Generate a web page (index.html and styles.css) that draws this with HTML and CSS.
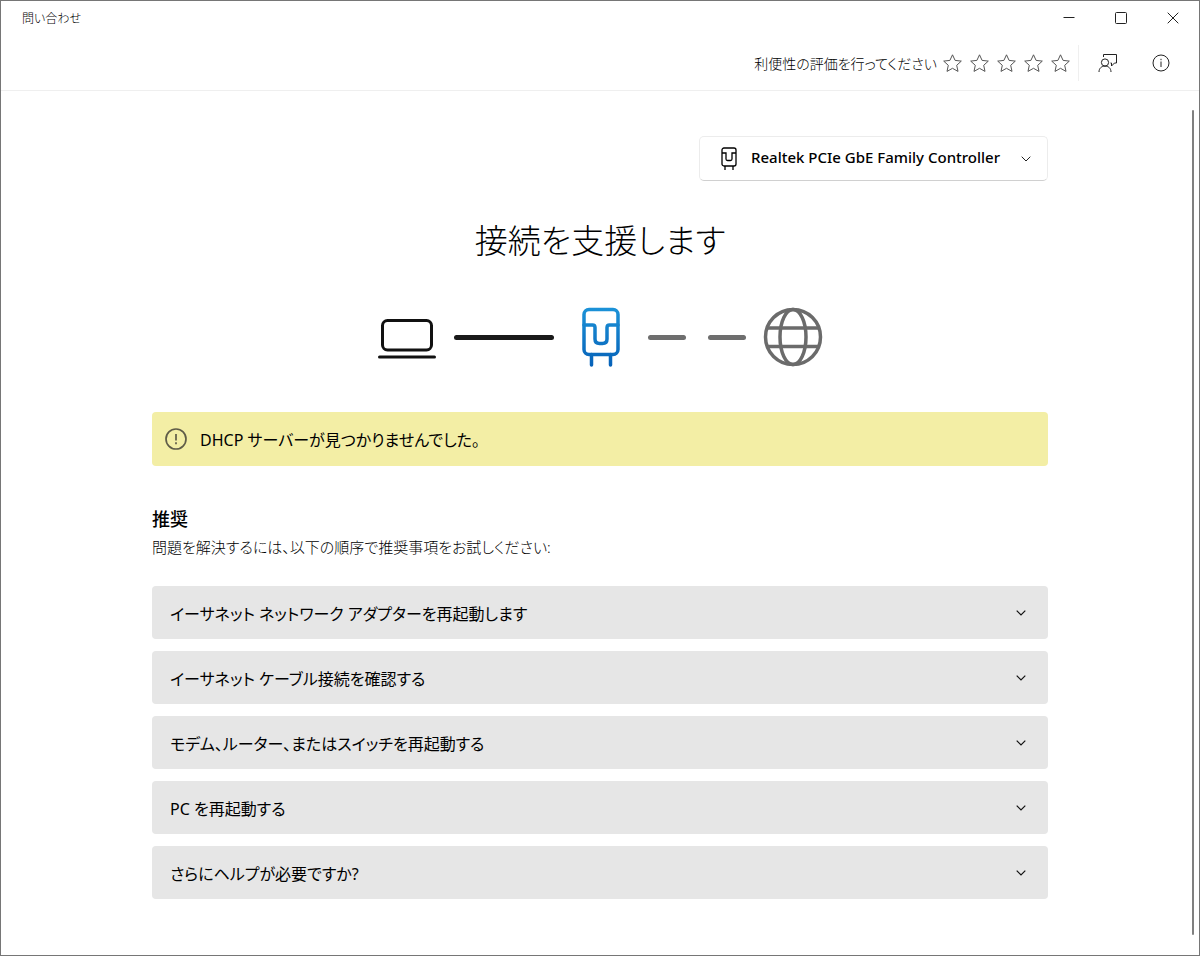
FILE: index.html
```html
<!DOCTYPE html>
<html lang="ja">
<head>
  <meta charset="UTF-8">
  <meta name="viewport" content="width=device-width, initial-scale=1.0">
  <title>問い合わせ</title>
  <link rel="stylesheet" href="styles.css">
</head>
<body>
  <div class="window">
    <header class="titlebar">
      <span class="app-name">問い合わせ</span>
      <div class="window-buttons">
        <button type="button" aria-label="最小化">
          <svg width="12" height="12" viewBox="0 0 12 12"><path d="M0.5 5.5h11"/></svg>
        </button>
        <button type="button" aria-label="最大化">
          <svg width="12" height="12" viewBox="0 0 12 12"><rect x="0.5" y="0.5" width="11" height="11" rx="1"/></svg>
        </button>
        <button type="button" aria-label="閉じる">
          <svg width="12" height="12" viewBox="0 0 12 12"><path d="M0.7 0.7l10.6 10.6M11.3 0.7L0.7 11.3"/></svg>
        </button>
      </div>
    </header>

    <!-- star outline shared by the rating buttons, chevron by the lists -->
    <svg class="symbols" width="0" height="0">
      <symbol id="star" viewBox="0 0 19 18">
        <path d="M9.5 0.800l2.600 5.600 6.200.7-4.600 4.200 1.300 6.100-5.500-3.100-5.500 3.100 1.300-6.100L0.700 7.100l6.200-.7z"/>
      </symbol>
      <symbol id="chevron" viewBox="0 0 10 6">
        <path d="M0.7 0.7L5 5l4.3-4.3"/>
      </symbol>
    </svg>

    <div class="toolbar">
      <span class="rating-text">利便性の評価を行ってください</span>
      <div class="rating">
        <button type="button" aria-label="星 1"><svg width="19" height="18"><use href="#star"/></svg></button>
        <button type="button" aria-label="星 2"><svg width="19" height="18"><use href="#star"/></svg></button>
        <button type="button" aria-label="星 3"><svg width="19" height="18"><use href="#star"/></svg></button>
        <button type="button" aria-label="星 4"><svg width="19" height="18"><use href="#star"/></svg></button>
        <button type="button" aria-label="星 5"><svg width="19" height="18"><use href="#star"/></svg></button>
      </div>
      <div class="tools">
        <button type="button" aria-label="フィードバック">
          <svg width="20" height="20" viewBox="0 0 20 20">
            <path d="M5.5 4V1.500h13v8.500h-2l-3 3v-3h-1"/>
            <circle cx="7" cy="9.500" r="3.600"/>
            <path d="M1 19c0-3.700 2.500-5.900 6-5.900s6 2.200 6 5.900"/>
          </svg>
        </button>
        <button type="button" aria-label="情報">
          <svg width="18" height="18" viewBox="0 0 18 18">
            <circle cx="9" cy="9" r="8"/>
            <path d="M9 7.500v5.500M9 4.800v1.400"/>
          </svg>
        </button>
      </div>
    </div>

    <main class="page">
      <div class="content">
        <div class="adapter">
          <svg class="adapter-icon" width="16" height="24" viewBox="0 0 16 24">
            <rect x="1" y="1" width="14" height="18" rx="2"/>
            <path d="M1 6h4v6q0 1.500 1.500 1.500h3q1.500 0 1.500-1.500V6h4M4 19v4M12 19v4"/>
          </svg>
          <select aria-label="ネットワーク アダプター">
            <option>Realtek PCIe GbE Family Controller</option>
          </select>
          <svg class="chevron" width="10" height="6"><use href="#chevron"/></svg>
        </div>

        <h1>接続を支援します</h1>

        <div class="diagram">
          <svg class="laptop" width="58" height="60" viewBox="0 0 58 60">
            <rect x="4.500" y="13.500" width="49" height="29.500" rx="5"/>
            <path d="M1.500 50h55"/>
          </svg>
          <span class="link link-ok"></span>
          <svg class="plug" width="38" height="60" viewBox="0 0 38 60">
            <defs>
              <linearGradient id="blue" gradientUnits="userSpaceOnUse" x1="0" y1="0" x2="0" y2="60">
                <stop offset="0" stop-color="#1c93d8"/>
                <stop offset="1" stop-color="#0661b8"/>
              </linearGradient>
            </defs>
            <rect x="2" y="2.500" width="34" height="45" rx="5"/>
            <path d="M2 18h8.500q2.500 0 2.500 2.500v11.500q0 4.500 4.500 4.500h3q4.500 0 4.500-4.500V20.500q0-2.500 2.500-2.500h8.500M9.500 47.500v10.500M28.500 47.500v10.500"/>
          </svg>
          <span class="link link-down"></span>
          <span class="link link-down"></span>
          <svg class="globe" width="60" height="60" viewBox="0 0 60 60">
            <circle cx="30" cy="30" r="27.500"/>
            <ellipse cx="30" cy="30" rx="13" ry="27.500"/>
            <path d="M4.500 21h51M4.500 39.500h51"/>
          </svg>
        </div>

        <div class="alert">
          <svg width="22" height="22" viewBox="0 0 22 22">
            <circle cx="11" cy="11" r="10"/>
            <path d="M11 6v6.500M11 14.300v2"/>
          </svg>
          <span>DHCP サーバーが見つかりませんでした。</span>
        </div>

        <h2>推奨</h2>
        <p class="hint">問題を解決するには、以下の順序で推奨事項をお試しください:</p>

        <div class="steps">
          <button type="button" class="step">イーサネット ネットワーク アダプターを再起動します<svg class="chevron" width="10" height="6"><use href="#chevron"/></svg></button>
          <button type="button" class="step">イーサネット ケーブル接続を確認する<svg class="chevron" width="10" height="6"><use href="#chevron"/></svg></button>
          <button type="button" class="step">モデム、ルーター、またはスイッチを再起動する<svg class="chevron" width="10" height="6"><use href="#chevron"/></svg></button>
          <button type="button" class="step">PC を再起動する<svg class="chevron" width="10" height="6"><use href="#chevron"/></svg></button>
          <button type="button" class="step">さらにヘルプが必要ですか?<svg class="chevron" width="10" height="6"><use href="#chevron"/></svg></button>
        </div>
      </div>
      <div class="scrollbar"></div>
    </main>
  </div>
</body>
</html>
```

FILE: styles.css
```css
* {
  margin: 0;
  padding: 0;
  box-sizing: border-box;
}

body {
  font-family: "Noto Sans", "Noto Sans CJK JP", sans-serif;
  font-feature-settings: "palt";
  color: #000;
  background-color: #fff;
}

button,
select {
  font: inherit;
  font-feature-settings: inherit;
  color: inherit;
  background: none;
  border: none;
  cursor: pointer;
}

svg {
  display: block;
  flex: none;
  fill: none;
  stroke: #222;
  stroke-width: 1;
}

.symbols {
  position: absolute;
}

.window {
  display: flex;
  flex-direction: column;
  min-height: 100vh;
  border: 1px solid #767676;
}

.titlebar {
  display: flex;
  align-items: center;
  justify-content: space-between;
  height: 34px;
  padding-left: 21px;
}

.app-name {
  font-size: 12px;
  font-weight: 300;
}

.window-buttons {
  display: flex;
}

.window-buttons button {
  display: flex;
  align-items: center;
  justify-content: center;
  width: 52px;
  height: 34px;
}

.toolbar {
  display: flex;
  align-items: center;
  justify-content: flex-end;
  height: 56px;
  border-bottom: 1px solid #efefef;
}

.rating-text {
  font-size: 14px;
  font-weight: 300;
}

.rating {
  display: flex;
  gap: 8px;
  padding: 0 8px 0 6px;
}

.rating svg {
  stroke: #555;
}

.tools {
  display: flex;
  height: 36px;
  padding: 0 12px 0 2px;
  border-left: 1px solid #efefef;
}

.tools button {
  display: flex;
  align-items: center;
  justify-content: center;
  width: 53px;
}

.page {
  position: relative;
  flex: 1;
  padding: 45px 40px 56px;
}

.content {
  display: flex;
  flex-direction: column;
  max-width: 896px;
  margin: 0 auto;
}

.adapter {
  display: flex;
  align-items: center;
  align-self: flex-end;
  height: 45px;
  padding: 0 16px 0 21px;
  border: 1px solid #ececec;
  border-bottom-color: #d0d0d0;
  border-radius: 5px;
}

.adapter-icon {
  margin-right: 14px;
  stroke: #000;
  stroke-width: 1.3;
}

.adapter select {
  appearance: none;
  margin-right: 20px;
  padding-bottom: 4px;
  font-size: 15px;
  font-weight: 500;
}

h1 {
  margin-top: 34px;
  font-size: 33px;
  font-weight: 300;
  line-height: 52px;
  text-align: center;
}

.diagram {
  display: flex;
  align-items: center;
  justify-content: center;
  margin-top: 40px;
}

.laptop {
  stroke: #111;
  stroke-width: 3;
  stroke-linecap: round;
}

.link {
  height: 5px;
  border-radius: 3px;
}

.link-ok {
  width: 100px;
  margin: 0 28px 0 18px;
  background-color: #1a1a1a;
}

.plug {
  margin-right: 28px;
  stroke: url(#blue);
  stroke-width: 3.5;
  stroke-linecap: round;
}

.link-down {
  width: 38px;
  margin-right: 22px;
  background-color: #6e6e6e;
}

.link-down + .globe {
  margin-left: -5px;
}

.globe {
  stroke: #6b6b6b;
  stroke-width: 3.5;
}

.alert {
  display: flex;
  align-items: center;
  gap: 13px;
  height: 54px;
  margin-top: 45px;
  padding: 0 13px;
  font-size: 16px;
  background-color: #f3eea5;
  border-radius: 4px;
}

.alert svg {
  stroke: #5f5c48;
  stroke-width: 1.7;
}

h2 {
  margin-top: 39px;
  font-size: 18px;
  font-weight: 500;
  line-height: 28px;
}

.hint {
  font-size: 15px;
  font-weight: 300;
  line-height: 28px;
}

.steps {
  display: flex;
  flex-direction: column;
  gap: 12px;
  margin-top: 25px;
}

.step {
  display: flex;
  align-items: center;
  justify-content: space-between;
  height: 53px;
  padding: 0 22px 0 18px;
  font-size: 16px;
  text-align: left;
  background-color: #e6e6e6;
  border-radius: 4px;
}

.step .chevron {
  stroke: #111;
  stroke-width: 1.2;
}

/* thin thumb along the right edge of the page */
.scrollbar {
  position: absolute;
  top: 19px;
  right: 5px;
  bottom: 20px;
  width: 2px;
  background-color: #808080;
  border-radius: 1px;
}
```
